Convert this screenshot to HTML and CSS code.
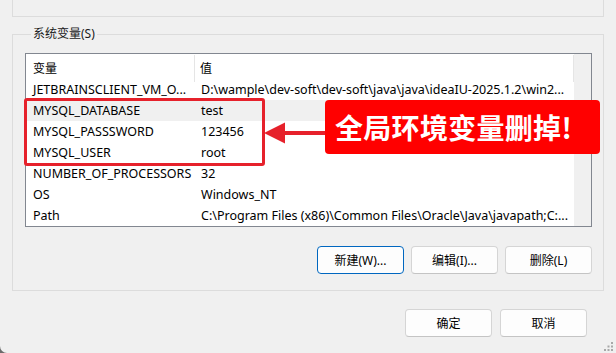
FILE: index.html
```html
<!DOCTYPE html>
<html lang="zh-CN">
<head>
<meta charset="utf-8">
<title>环境变量</title>
<link rel="stylesheet" href="styles.css">
</head>
<body>
<div class="window">
  <div class="top-group"></div>

  <fieldset class="sys-group">
    <legend class="sys-legend">系统变量(S)</legend>
    <div class="list">
      <div class="list-main">
        <div class="list-head">
          <div class="head-cell">变量</div>
          <div class="head-cell">值</div>
        </div>
        <div class="row"><div class="cell">JETBRAINSCLIENT_VM_O...</div><div class="cell val">D:\wample\dev-soft\dev-soft\java\java\ideaIU-2025.1.2\win2...</div></div>
        <div class="row row-hover"><div class="cell">MYSQL_DATABASE</div><div class="cell val">test</div></div>
        <div class="row"><div class="cell">MYSQL_PASSSWORD</div><div class="cell val">123456</div></div>
        <div class="row"><div class="cell">MYSQL_USER</div><div class="cell val">root</div></div>
        <div class="row"><div class="cell">NUMBER_OF_PROCESSORS</div><div class="cell val">32</div></div>
        <div class="row"><div class="cell">OS</div><div class="cell val">Windows_NT</div></div>
        <div class="row"><div class="cell">Path</div><div class="cell val">C:\Program Files (x86)\Common Files\Oracle\Java\javapath;C:...</div></div>
      </div>
      <div class="scroll-track"></div>
    </div>
    <div class="actions">
      <button class="btn btn-focus">新建(W)...</button>
      <button class="btn">编辑(I)...</button>
      <button class="btn">删除(L)</button>
    </div>
  </fieldset>

  <div class="footer">
    <button class="btn">确定</button>
    <button class="btn">取消</button>
  </div>

  <div class="annot-box"></div>
  <svg class="annot-arrow" width="62" height="22" viewBox="0 0 62 22">
    <polygon points="0,11 21,0.5 21,21.5" fill="#e6212b"/>
    <rect x="20" y="9" width="42" height="4" fill="#e6212b"/>
  </svg>
  <div class="annot-label">全局环境变量删掉!</div>

  <svg class="grip" width="12" height="10" viewBox="0 0 12 10">
    <rect x="9" y="0" width="2" height="2" fill="#a8a8a8"/>
    <rect x="5.5" y="3.5" width="2" height="2" fill="#a8a8a8"/>
    <rect x="9" y="3.5" width="2" height="2" fill="#a8a8a8"/>
    <rect x="2" y="7" width="2" height="2" fill="#a8a8a8"/>
    <rect x="5.5" y="7" width="2" height="2" fill="#a8a8a8"/>
    <rect x="9" y="7" width="2" height="2" fill="#a8a8a8"/>
  </svg>
</div>
</body>
</html>
```

FILE: styles.css
```css
html {
  background: #6b6b6b;
}

body {
  margin: 0;
  font-family: "Noto Sans", "Noto Sans CJK SC", sans-serif;
  font-size: 12px;
  color: #000;
}

.window {
  position: relative;
  height: 353px;
  overflow: hidden;
  background: #f0f0f0;
  border-bottom-left-radius: 7px;
}

.top-group {
  height: 16px;
  margin: 0 12px;
  border: 1px solid #dcdcdc;
  border-top: none;
}

.sys-group {
  margin: 9px 12px 0;
  padding: 11px 11px 16px 12px;
  border: 1px solid #dcdcdc;
  min-inline-size: 0;
}

.sys-legend {
  margin-left: 6px;
  padding: 0 2px;
  height: 16px;
  line-height: 16px;
  font-family: "Noto Sans", "Noto Sans CJK SC", sans-serif;
  font-size: 12px;
  color: #1a1a1a;
}

.list {
  display: flex;
  border: 1px solid #828790;
  background: #fff;
  height: 172px;
  overflow: hidden;
}

.list-main {
  flex: 1;
  min-width: 0;
}

.scroll-track {
  width: 17px;
  background: #f0f0f0;
}

.list-head {
  display: grid;
  grid-template-columns: 169px 1fr;
  height: 25px;
}

.head-cell {
  padding-left: 7px;
  line-height: 27px;
  border-right: 1px solid #e5e5e5;
  margin: 1px 0 0;
}

.head-cell + .head-cell {
  padding-left: 5px;
}

.row {
  display: grid;
  grid-template-columns: 169px 1fr;
  height: 21px;
  line-height: 21px;
  font-size: 12.5px;
}

.row-hover {
  background: #f0f0f0;
}

.cell {
  padding-left: 7px;
  white-space: nowrap;
  overflow: hidden;
}

.cell.val {
  padding-left: 6px;
}

.actions {
  display: flex;
  justify-content: flex-end;
  gap: 7px;
  margin-top: 19px;
}

.btn {
  width: 87px;
  height: 28px;
  padding: 0;
  background: #fdfdfd;
  border: 1px solid #d5d5d5;
  border-bottom-color: #c4c4c4;
  border-radius: 4px;
  font-family: "Noto Sans", "Noto Sans CJK SC", sans-serif;
  font-size: 12px;
  color: #000;
}

.btn-focus {
  border-color: #0067c0;
}

.footer {
  display: flex;
  justify-content: flex-end;
  gap: 8px;
  margin: 18px 29px 0 0;
}

.annot-box {
  position: absolute;
  left: 24px;
  top: 98px;
  width: 235px;
  height: 62px;
  border: 3px solid #e6212b;
  border-radius: 3px;
}

.annot-arrow {
  position: absolute;
  left: 264px;
  top: 122px;
}

.annot-label {
  position: absolute;
  left: 325px;
  top: 100px;
  width: 275px;
  height: 54px;
  box-sizing: border-box;
  padding-left: 10px;
  background: #ff0000;
  border-radius: 4px;
  color: #fff;
  font-family: "Noto Sans CJK SC", sans-serif;
  font-weight: 700;
  font-size: 28px;
  line-height: 54px;
  letter-spacing: 0.3px;
  white-space: nowrap;
}

.grip {
  position: absolute;
  right: 2px;
  bottom: 1px;
}
```
